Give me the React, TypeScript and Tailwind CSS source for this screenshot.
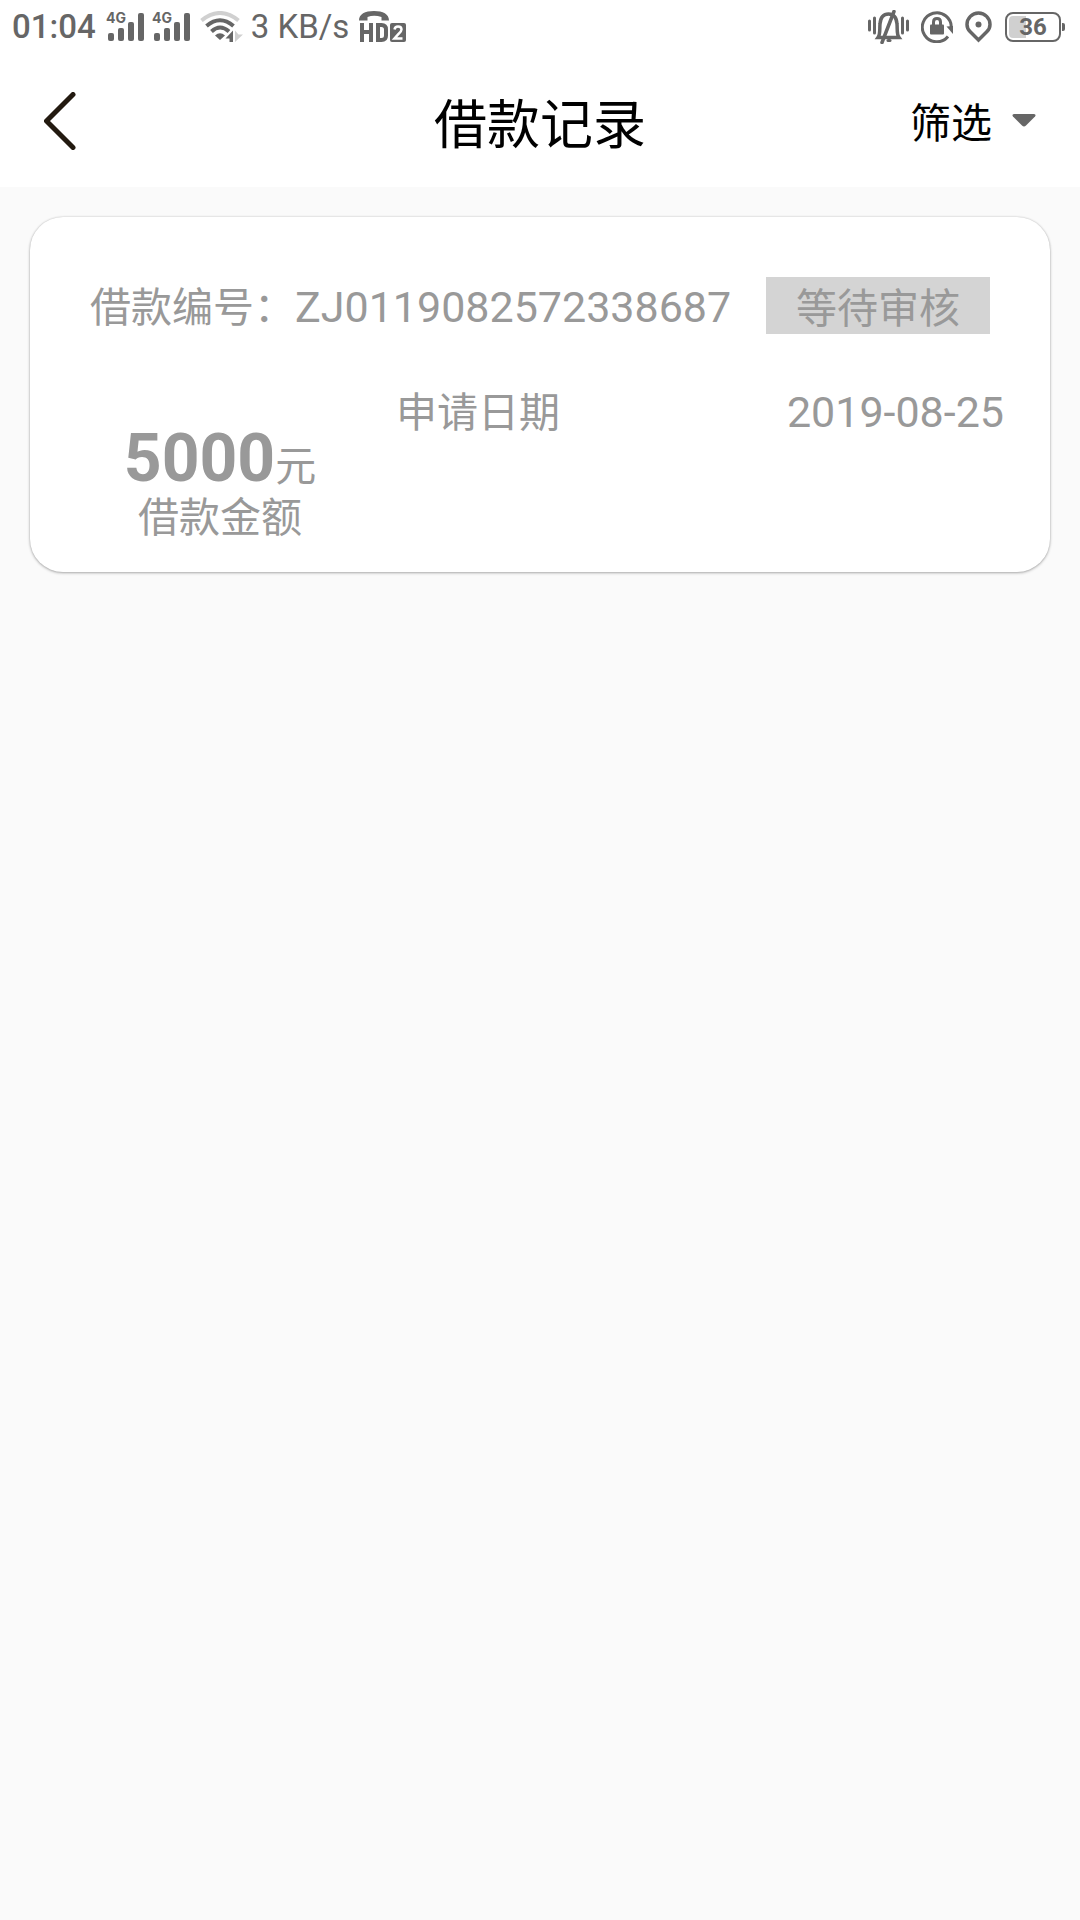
import type { ReactNode } from "react";

const loans = [
  {
    id: "ZJ0119082572338687",
    status: "等待审核",
    amount: 5000,
    date: "2019-08-25",
  },
];

function SignalIcon() {
  return (
    <svg width="38" height="40" viewBox="0 -5 38 40" fill="currentColor">
      <text x="0" y="11" className="font-[Inter,sans-serif] text-[14px] font-bold">
        4G
      </text>
      <rect x="2" y="21" width="6" height="8" rx="2" />
      <rect x="12" y="16" width="6" height="13" rx="2" />
      <rect x="22" y="10" width="6" height="19" rx="2" />
      <rect x="32" y="1" width="6" height="28" rx="2" />
    </svg>
  );
}

function WifiIcon() {
  return (
    <svg width="43" height="32" viewBox="0 0 43 32" fill="none">
      <path d="M1.500 9.500Q20-5.500 38.500 9.500" stroke="#d0d0d0" strokeWidth="4" />
      <path d="M6.500 15Q20 3.500 33.500 15" stroke="currentColor" strokeWidth="4" />
      <path d="M11.500 20.500Q20 12.500 29 20.500" stroke="currentColor" strokeWidth="4" />
      <path d="M15 24.500Q20 20 25 24.500L20 29Z" fill="currentColor" />
      <path d="M33 19.500V31H29.500V27.500H25.500Z" fill="currentColor" />
      <path d="M35 19.500V31L43 23.500H38.500Z" fill="#d0d0d0" />
    </svg>
  );
}

function HdCallIcon() {
  return (
    <svg width="47" height="32" viewBox="0 0 47 32" fill="none">
      <path
        d="M0 9.500C0 3 6 0 15 0s15 3 15 9.500H22.500V6Q15 3.500 8.500 6V9.500Z"
        fill="currentColor"
      />
      <path d="M3 12V31M12 12V31M3 21H12" stroke="currentColor" strokeWidth="4" />
      <path
        d="M19 14H22.500Q27 14 27 18.500V24.500Q27 29 22.500 29H19Z"
        stroke="currentColor"
        strokeWidth="4"
      />
      <rect x="31" y="12" width="16" height="19" rx="2" fill="currentColor" />
      <path
        d="M35.500 18.500Q36 15.500 39 15.500Q42.500 15.500 42.500 18.500Q42.500 20.500 39.500 23L35.500 27.500H43.500"
        stroke="#fff"
        strokeWidth="2.500"
      />
    </svg>
  );
}

function MutedBellIcon() {
  return (
    <svg width="41" height="34" viewBox="0 0 41 34" fill="none" stroke="currentColor">
      <path
        d="M1.500 11V20M6.500 8V23M34.500 8V23M39.500 11V20"
        strokeWidth="3"
        strokeLinecap="round"
      />
      <path
        d="M10 27.500C12.500 24 11.500 19 12 14C12.500 7 16 4 20.500 4S28.500 7 29 14C29.500 19 28.500 24 31 27.500Z"
        strokeWidth="3.500"
      />
      <path d="M26 1.500L14 32.500" strokeWidth="3.500" strokeLinecap="round" />
      <path d="M20 30.500H22" strokeWidth="3" strokeLinecap="round" />
    </svg>
  );
}

function RotationLockIcon() {
  return (
    <svg width="32" height="32" viewBox="0 0 32 32" fill="none">
      <path
        d="M27 25.500A14.500 14.500 0 1 1 30.300 17"
        stroke="currentColor"
        strokeWidth="3"
      />
      <path d="M25.500 15.500L32 15V23Z" fill="currentColor" />
      <rect x="9" y="13.500" width="14" height="10" rx="1" fill="currentColor" />
      <path d="M12.500 14V11Q12.500 7.500 16 7.500T19.500 11V14" stroke="currentColor" strokeWidth="3" />
    </svg>
  );
}

function LocationIcon() {
  return (
    <svg width="28" height="32" viewBox="0 0 28 32" fill="none">
      <path
        d="M13.500 29L5 20.500C3 18.500 2 16 2 13.500A11.500 11.500 0 0 1 25 13.500C25 16 24 18.500 22 20.500Z"
        stroke="currentColor"
        strokeWidth="3.500"
      />
      <circle cx="13.500" cy="13.500" r="3" fill="currentColor" />
    </svg>
  );
}

function Battery({ level }: { level: number }) {
  return (
    <div className="flex items-center gap-px">
      <div className="relative flex h-[30px] w-14 items-center justify-center rounded-[8px] border-2 border-current">
        <div className="absolute inset-[2px] overflow-hidden rounded-[4px]">
          <div className="h-full bg-[#d0d0d0]" style={{ width: `${level}%` }} />
        </div>
        <span className="relative text-[24px] leading-none font-bold">{level}</span>
      </div>
      <div className="h-2 w-[3px] rounded-r-[2px] bg-current" />
    </div>
  );
}

function StatusBar() {
  return (
    <div className="flex h-[54px] items-center justify-between pr-[15px] pl-3 text-[33px] leading-[54px] text-[#666]">
      <div className="flex items-center gap-2">
        <span className="mr-[2px] font-medium">01:04</span>
        <SignalIcon />
        <SignalIcon />
        <div className="flex items-center gap-2 px-[2px]">
          <WifiIcon />
          <span>3 KB/s</span>
        </div>
        <HdCallIcon />
      </div>
      <div className="flex items-center gap-3">
        <MutedBellIcon />
        <RotationLockIcon />
        <LocationIcon />
        <Battery level={36} />
      </div>
    </div>
  );
}

function Header({ title, action }: { title: string; action: ReactNode }) {
  return (
    <header className="grid h-[133px] grid-cols-[1fr_auto_1fr] items-center px-11">
      <button type="button" aria-label="返回" className="justify-self-start">
        <svg width="33" height="58" viewBox="0 0 33 58" fill="none">
          <path
            d="M29 2.500L2.500 29L29 55.500"
            stroke="#231a10"
            strokeWidth="5"
            strokeLinecap="round"
            strokeLinejoin="round"
          />
        </svg>
      </button>
      <h1 className="pt-[10px] text-[53px] leading-[60px] text-black">{title}</h1>
      <div className="justify-self-end">{action}</div>
    </header>
  );
}

function FilterButton() {
  return (
    <button type="button" className="flex items-center gap-5 text-[41px] leading-[50px] text-black">
      <span className="pt-[7px]">筛选</span>
      <svg width="24" height="14" viewBox="0 0 24 14" fill="#666">
        <path d="M2 0H22Q24.500 0.500 23 2.500L14 11.500Q12 13.500 10 11.500L1 2.500Q-0.500 0.500 2 0Z" />
      </svg>
    </button>
  );
}

function LoanCard({ loan }: { loan: (typeof loans)[number] }) {
  return (
    <article className="rounded-[33px] bg-white pt-[60px] pb-7 text-[41px] text-[#999] shadow-[0_1px_3px_rgba(0,0,0,0.3),0_0_2px_rgba(0,0,0,0.15)]">
      <div className="flex items-start justify-between px-[60px] leading-[50px]">
        <div className="flex items-baseline pt-[5px]">
          <span>借款编号：</span>
          <span className="text-[43px]">{loan.id}</span>
        </div>
        <span className="bg-[#d4d4d4] px-[30px] pt-[7px]">{loan.status}</span>
      </div>
      <div className="mt-12 flex gap-[46px] pr-[46px] pl-[60px]">
        <div className="w-[260px] pt-11 text-center">
          <p className="leading-[41px]">
            <strong className="text-[66px] leading-[66px] font-bold">{loan.amount}</strong>元
          </p>
          <p className="leading-[52px]">借款金额</p>
        </div>
        <dl className="flex flex-1 items-baseline justify-between leading-[60px]">
          <dt>申请日期</dt>
          <dd className="text-[43px]">{loan.date}</dd>
        </dl>
      </div>
    </article>
  );
}

export default function App() {
  return (
    <div className="min-h-screen bg-[#fafafa] font-[Roboto,'Noto_Sans_CJK_SC',sans-serif]">
      <div className="bg-white">
        <StatusBar />
        <Header title="借款记录" action={<FilterButton />} />
      </div>
      <main className="flex flex-col gap-[30px] p-[30px]">
        {loans.map((loan) => (
          <LoanCard key={loan.id} loan={loan} />
        ))}
      </main>
    </div>
  );
}
